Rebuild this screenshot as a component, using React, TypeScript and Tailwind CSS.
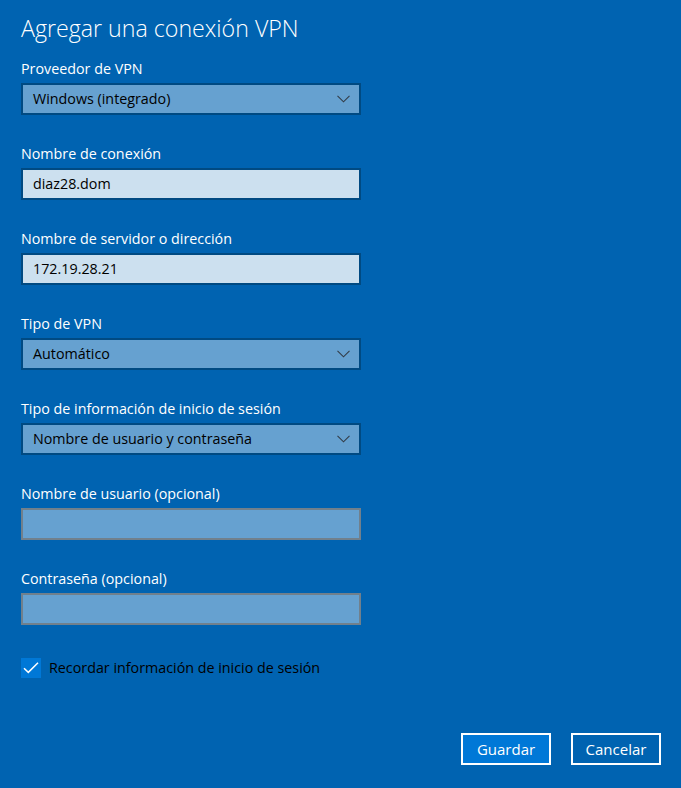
import React from "react";

const font = { fontFamily: '"Open Sans", "Noto Sans", sans-serif' };

function Chevron() {
  return (
    <svg width="13" height="8" viewBox="0 0 13 8" className="shrink-0">
      <path d="M0.5 0.8 L6.5 6.8 L12.5 0.8" fill="none" stroke="#333d48" strokeWidth="1.1" />
    </svg>
  );
}

function Select({ value }: { value: string }) {
  return (
    <div className="flex h-[32px] w-[340px] items-center justify-between border-2 border-[#004a82] bg-[#66a1d0] pl-[10px] pr-[9px]">
      <span className="text-[14.3px] leading-[20px] text-black">{value}</span>
      <Chevron />
    </div>
  );
}

function Input({ value }: { value?: string }) {
  if (value) {
    return (
      <div className="flex h-[32px] w-[340px] items-center border-2 border-[#004a82] bg-[#cce0ef] pl-[10px]">
        <span className="text-[14.3px] leading-[20px] text-black">{value}</span>
      </div>
    );
  }
  return <div className="h-[32px] w-[340px] border-2 border-[#71808c] bg-[#66a1d0]" />;
}

function Field({ label, children }: { label: string; children: React.ReactNode }) {
  return (
    <div className="flex flex-col">
      <div className="h-[20px] text-[14.3px] leading-[22px] text-white">{label}</div>
      <div className="mt-[5px]">{children}</div>
    </div>
  );
}

export default function App() {
  return (
    <div className="flex h-[788px] w-[681px] flex-col bg-[#0063b1] pl-[21px] pr-[20px]" style={font}>
      <h1 className="mt-[12px] h-[32px] text-[23.2px] font-light leading-[32px] text-white">Agregar una conexión VPN</h1>
      <div className="mt-[14px] flex flex-col gap-[28px]">
        <Field label="Proveedor de VPN">
          <Select value="Windows (integrado)" />
        </Field>
        <Field label="Nombre de conexión">
          <Input value="diaz28.dom" />
        </Field>
        <Field label="Nombre de servidor o dirección">
          <Input value="172.19.28.21" />
        </Field>
        <Field label="Tipo de VPN">
          <Select value="Automático" />
        </Field>
        <Field label="Tipo de información de inicio de sesión">
          <Select value="Nombre de usuario y contraseña" />
        </Field>
        <Field label="Nombre de usuario (opcional)">
          <Input />
        </Field>
        <Field label="Contraseña (opcional)">
          <Input />
        </Field>
      </div>
      <label className="mt-[33px] flex items-center gap-[8px]">
        <span className="flex h-[20px] w-[20px] items-center justify-center bg-[#0078d7]">
          <svg width="16" height="12" viewBox="0 0 16 12">
            <path d="M1 6.2 L5.3 10.4 L15 0.8" fill="none" stroke="white" strokeWidth="1.5" />
          </svg>
        </span>
        <span className="text-[14.3px] leading-[20px] text-black">Recordar información de inicio de sesión</span>
      </label>
      <div className="mt-auto mb-[23px] flex justify-end gap-[20px]">
        <button className="h-[32px] w-[90px] border-2 border-white bg-[#0078d7] text-[15px] text-white">Guardar</button>
        <button className="h-[32px] w-[90px] border-2 border-white bg-[#0063b1] text-[15px] text-white">Cancelar</button>
      </div>
    </div>
  );
}
